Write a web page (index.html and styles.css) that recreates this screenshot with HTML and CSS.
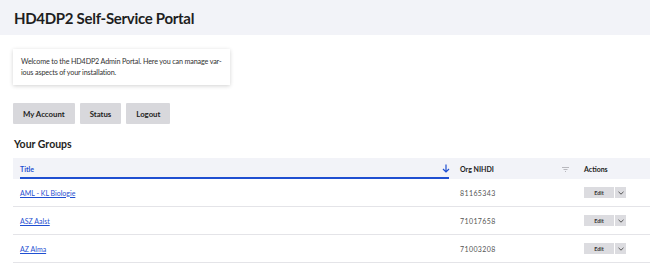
FILE: index.html
```html
<!DOCTYPE html>
<html>
<head>
    <meta charset="UTF-8">
    <title>HD4DP2 Self-Service Portal</title>
    <link rel="stylesheet" href="styles.css">
</head>
<body>
    <header class="topbar">
        <h1>HD4DP2 Self-Service Portal</h1>
    </header>
    <main class="content">
        <div class="welcome">
            Welcome to the HD4DP2 Admin Portal. Here you can manage var-<br>ious aspects of your installation.
        </div>
        <div class="nav-buttons">
            <button class="nav-btn">My Account</button>
            <button class="nav-btn">Status</button>
            <button class="nav-btn">Logout</button>
        </div>
        <h2>Your Groups</h2>
        <table class="groups">
            <thead>
                <tr>
                    <th class="col-title sorted">
                        <span>Title</span>
                        <svg class="sort-icon" width="8" height="9" viewBox="0 0 8 9"><path d="M4 0.5V8M1 5l3 3 3-3" fill="none" stroke="#1f4fd1" stroke-width="1.2"/></svg>
                    </th>
                    <th class="col-org">
                        <span>Org NIHDI</span>
                        <svg class="filter-icon" width="7" height="5" viewBox="0 0 7 5"><path d="M0 0.5h7M1.5 2.5h4M3 4.5h1" stroke="#b8b8be" stroke-width="1"/></svg>
                    </th>
                    <th class="col-actions">Actions</th>
                </tr>
            </thead>
            <tbody>
                <tr>
                    <td><a href="#">AML - KL Biologie</a></td>
                    <td class="num">81165343</td>
                    <td><div class="split"><span class="edit">Edit</span><span class="drop"><svg width="6" height="4" viewBox="0 0 6 4"><path d="M0.5 0.8l2.5 2.4 2.5-2.4" fill="none" stroke="#555" stroke-width="1"/></svg></span></div></td>
                </tr>
                <tr>
                    <td><a href="#">ASZ Aalst</a></td>
                    <td class="num">71017658</td>
                    <td><div class="split"><span class="edit">Edit</span><span class="drop"><svg width="6" height="4" viewBox="0 0 6 4"><path d="M0.5 0.8l2.5 2.4 2.5-2.4" fill="none" stroke="#555" stroke-width="1"/></svg></span></div></td>
                </tr>
                <tr>
                    <td><a href="#">AZ Alma</a></td>
                    <td class="num">71003208</td>
                    <td><div class="split"><span class="edit">Edit</span><span class="drop"><svg width="6" height="4" viewBox="0 0 6 4"><path d="M0.5 0.8l2.5 2.4 2.5-2.4" fill="none" stroke="#555" stroke-width="1"/></svg></span></div></td>
                </tr>
            </tbody>
        </table>
    </main>
</body>
</html>
```

FILE: styles.css
```css
body {
    font-family: Lato, "Open Sans", Arial, sans-serif;
    color: #222;
    margin: 0;
    padding: 0;
    background: #fff;
    overflow: hidden;
}

.topbar {
    background: #f2f3f8;
    height: 35px;
    padding-left: 14px;
    display: flex;
    align-items: center;
}

.topbar h1 {
    margin: 0;
    font-size: 15px;
    letter-spacing: -0.3px;
    font-weight: 700;
    color: #1e1e22;
}

.content {
    padding-left: 13px;
}

.welcome {
    margin-top: 14px;
    width: 201px;
    padding: 7px 8px;
    font-size: 7.2px;
    letter-spacing: -0.15px;
    line-height: 11px;
    white-space: nowrap;
    color: #333;
    background: #fff;
    box-shadow: 0 1px 4px rgba(0, 0, 0, 0.18);
}

.nav-buttons {
    margin-top: 18px;
    display: flex;
    gap: 5px;
}

.nav-btn {
    height: 21px;
    padding: 0 10px;
    border: none;
    border-radius: 1px;
    background: #d8d8dc;
    font-family: inherit;
    font-size: 7.8px;
    font-weight: 700;
    color: #1e1e22;
}

h2 {
    margin: 14px 0 0 1px;
    font-size: 10.5px;
    font-weight: 700;
    color: #1e1e22;
}

.groups {
    margin-top: 8px;
    width: 100%;
    border-collapse: collapse;
    font-size: 7px;
}

.groups th {
    background: #f2f3f8;
    height: 21px;
    padding: 0 7px;
    text-align: left;
    font-weight: 700;
    color: #222;
    position: relative;
}

.groups th span {
    vertical-align: middle;
}

.col-title {
    width: 426px;
    color: #1f4fd1 !important;
}

.col-title.sorted::after {
    content: "";
    position: absolute;
    left: 7px;
    right: 4px;
    bottom: 0;
    height: 2px;
    background: #1f4fd1;
}

.sort-icon {
    position: absolute;
    right: 3px;
    top: 6px;
}

.col-org {
    width: 110px;
}

.filter-icon {
    position: absolute;
    right: 8px;
    top: 9px;
}

.groups td {
    height: 27px;
    padding: 0 7px;
    border-bottom: 1px solid #e4e4e8;
}

.groups a {
    color: #1f4fd1;
    text-decoration: underline;
}

.num {
    color: #555;
    letter-spacing: 0.4px;
}

.split {
    display: flex;
    width: 42px;
    height: 11px;
}

.edit {
    width: 30px;
    background: #dcdce0;
    font-size: 5.5px;
    font-weight: 700;
    color: #333;
    display: flex;
    align-items: center;
    justify-content: center;
}

.drop {
    margin-left: 1px;
    width: 11px;
    background: #dcdce0;
    display: flex;
    align-items: center;
    justify-content: center;
}
```
